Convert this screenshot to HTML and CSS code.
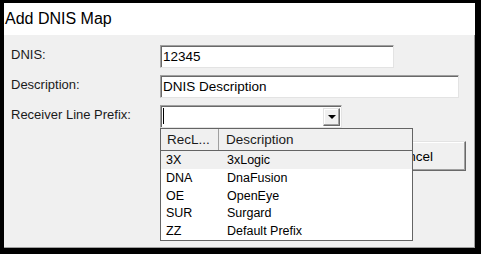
FILE: index.html
```html
<!DOCTYPE html>
<html lang="en">
<head>
<meta charset="UTF-8">
<title>Add DNIS Map</title>
<link rel="stylesheet" href="styles.css">
</head>
<body>
    <div class="dialog">
        <div class="titlebar">Add DNIS Map</div>
        <div class="content">
            <div class="form">
                <label>DNIS:</label>
                <div class="field short">12345</div>
                <label>Description:</label>
                <div class="field long">DNIS Description</div>
                <label>Receiver Line Prefix:</label>
                <div class="combo">
                    <div class="combo-text"><span class="caret"></span></div>
                    <div class="combo-btn"><span class="arrow"></span></div>
                    <!-- open dropdown list -->
                    <div class="droplist">
                        <div class="row head">
                            <div class="col1">RecL...</div>
                            <div class="col2">Description</div>
                        </div>
                        <div class="row hot"><div class="col1">3X</div><div class="col2">3xLogic</div></div>
                        <div class="row"><div class="col1">DNA</div><div class="col2">DnaFusion</div></div>
                        <div class="row"><div class="col1">OE</div><div class="col2">OpenEye</div></div>
                        <div class="row"><div class="col1">SUR</div><div class="col2">Surgard</div></div>
                        <div class="row"><div class="col1">ZZ</div><div class="col2">Default Prefix</div></div>
                    </div>
                </div>
            </div>
            <div class="buttons">
                <button>Cancel</button>
            </div>
        </div>
    </div>
</body>
</html>
```

FILE: styles.css
```css
body {
    margin: 0;
    background: #000;
    font-family: "Liberation Sans", Arial, sans-serif;
}

.dialog {
    width: 471px;
    height: 245px;
    border-style: solid;
    border-color: #000;
    border-width: 3px 6px 6px 4px;
    background: #f0f0f0;
    display: flex;
    flex-direction: column;
    box-shadow: inset -1px -1px 0 #a0a0a0;
}

.titlebar {
    height: 32px;
    background: #fff;
    font-size: 16px;
    color: #000;
    padding-left: 1px;
    line-height: 32px;
}

.content {
    flex: 1;
    padding: 10px 7px 0 7px;
}

.form {
    display: grid;
    grid-template-columns: 149px 1fr;
    row-gap: 7px;
    align-items: start;
}

label {
    font-size: 13px;
    color: #1a1a1a;
    padding-top: 2px;
}

.field {
    height: 23px;
    box-sizing: border-box;
    background: #fff;
    border: 1px solid;
    border-color: #a0a0a0 #e3e3e3 #e3e3e3 #a0a0a0;
    box-shadow: inset 1px 1px 0 #696969;
    font-size: 13.5px;
    line-height: 22px;
    padding-left: 2px;
    color: #000;
}

.short {
    width: 234px;
}

.long {
    width: 299px;
}

.combo {
    position: relative;
    width: 182px;
    height: 23px;
    box-sizing: border-box;
    background: #fff;
    border: 1px solid;
    border-color: #a0a0a0 #e3e3e3 #e3e3e3 #a0a0a0;
    box-shadow: inset 1px 1px 0 #696969;
    display: flex;
}

.combo-text {
    flex: 1;
    padding: 2px 0 0 2px;
}

.caret {
    display: block;
    width: 1px;
    height: 16px;
    background: #000;
}

.combo-btn {
    width: 17px;
    margin: 2px 1px 1px 0;
    box-sizing: border-box;
    background: #f0f0f0;
    border: 1px solid;
    border-color: #e3e3e3 #696969 #696969 #e3e3e3;
    box-shadow: inset -1px -1px 0 #a0a0a0, inset 1px 1px 0 #fff;
    display: flex;
    align-items: center;
    justify-content: center;
}

.arrow {
    width: 0;
    height: 0;
    border-left: 4px solid transparent;
    border-right: 4px solid transparent;
    border-top: 4px solid #000;
}

.droplist {
    position: absolute;
    left: -1px;
    top: 22px;
    width: 253px;
    box-sizing: border-box;
    background: #fff;
    border: 1px solid #646464;
    z-index: 2;
    font-size: 12.5px;
    color: #000;
}

.row {
    display: flex;
    height: 17.8px;
    line-height: 19px;
}

.row .col1 {
    width: 57px;
    padding-left: 5px;
    box-sizing: border-box;
}

.row .col2 {
    flex: 1;
    padding-left: 9px;
}

.row.head {
    height: 22px;
    line-height: 21px;
    background: #f0f0f0;
    font-size: 13.5px;
    color: #1a1a1a;
    box-sizing: border-box;
    border-bottom: 1px solid #646464;
}

.row.head .col1 {
    border-right: 1px solid #a0a0a0;
    padding-left: 6px;
    width: 58px;
}

.row.head .col2 {
    padding-left: 7px;
}

.row.hot {
    background: #f0f0f0;
}

.buttons {
    display: flex;
    justify-content: flex-end;
    margin-top: 13px;
    padding-right: 2px;
}

button {
    width: 108px;
    height: 30px;
    background: #f0f0f0;
    border: 1px solid;
    border-color: #e3e3e3 #696969 #696969 #e3e3e3;
    box-shadow: inset -1px -1px 0 #a0a0a0, inset 1px 1px 0 #fff;
    font-family: "Liberation Sans", Arial, sans-serif;
    font-size: 13.5px;
    color: #000;
    padding: 0;
}
```
